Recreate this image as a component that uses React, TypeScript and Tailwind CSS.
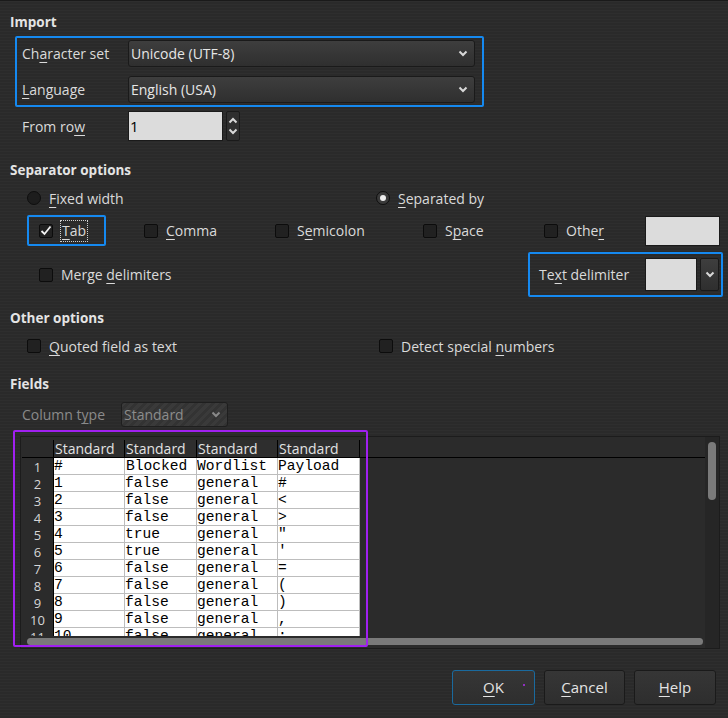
import React from 'react';

const ui = "font-['Open_Sans',sans-serif]";
const mono = "font-['Liberation_Mono',monospace]";

const U: React.FC<{ children: React.ReactNode }> = ({ children }) => (
  <span className="underline underline-offset-[3px] decoration-1">{children}</span>
);

const Chevron: React.FC<{ up?: boolean; color?: string }> = ({ up, color = '#d8d8d8' }) => (
  <svg width="10" height="7" viewBox="0 0 10 7">
    <polyline
      points={up ? '1.5,5.5 5,2 8.5,5.5' : '1.5,1.5 5,5 8.5,1.5'}
      fill="none"
      stroke={color}
      strokeWidth="2"
    />
  </svg>
);

const Check: React.FC<{ checked?: boolean }> = ({ checked }) => (
  <span className="w-[14px] h-[14px] shrink-0 rounded-[2px] border border-[#0c0c0c] bg-[#212121] flex items-center justify-center">
    {checked && (
      <svg width="12" height="11" viewBox="0 0 12 11">
        <polyline points="1.5,6 4.5,9 10.5,1.5" fill="none" stroke="#f2f2f2" strokeWidth="1.8" />
      </svg>
    )}
  </span>
);

const Radio: React.FC<{ on?: boolean }> = ({ on }) => (
  <span
    className={`w-[14px] h-[14px] shrink-0 rounded-full border border-[#0e0e0e] flex items-center justify-center ${
      on ? 'bg-[#3a3a3a]' : 'bg-[#1d1d1d]'
    }`}
  >
    {on && <span className="w-[6px] h-[6px] rounded-full bg-[#eeeeee]" />}
  </span>
);

const Select: React.FC<{ value: string }> = ({ value }) => (
  <div className="w-[347px] h-[27px] rounded-[3px] border border-[#1a1a1a] bg-gradient-to-b from-[#3e3e3e] to-[#2f2f2f] flex items-center justify-between pl-[2px] pr-[6px] text-[#e6e6e6]">
    <span>{value}</span>
    <Chevron />
  </div>
);

const Heading: React.FC<{ children: React.ReactNode; mt: string }> = ({ children, mt }) => (
  <div className={`h-[20px] leading-[20px] pl-[10px] font-bold text-[13.5px] text-[#e4e4e4] ${mt}`}>{children}</div>
);

const rows = [
  ['#', 'Blocked', 'Wordlist', 'Payload'],
  ['1', 'false', 'general', '#'],
  ['2', 'false', 'general', '<'],
  ['3', 'false', 'general', '>'],
  ['4', 'true', 'general', '"'],
  ['5', 'true', 'general', "'"],
  ['6', 'false', 'general', '='],
  ['7', 'false', 'general', '('],
  ['8', 'false', 'general', ')'],
  ['9', 'false', 'general', ','],
  ['10', 'false', 'general', ';'],
  ['11', 'false', 'general', ':'],
];

const colW = ['w-[71px]', 'w-[72px]', 'w-[81px]', 'w-[82px]'];

const Grid: React.FC = () => (
  <div className="relative mt-[9px] ml-[20px] w-[700px] h-[213px] border border-[#1c1c1c] bg-[#2b2b2b] flex">
    <div className="flex-1 flex flex-col min-w-0">
      <div className="flex-1 overflow-hidden pt-[3px] pl-[1px]">
        <div className="flex h-[18px] border-b border-black text-[#e2e2e2] text-[14px] leading-[18px]">
          <div className="w-[32px] border-r border-black bg-[#2b2b2b]" />
          {colW.map((w, i) => (
            <div key={i} className={`${w} pl-[1px] border-r border-black bg-[#2e2e2e]`}>
              Standard
            </div>
          ))}
        </div>
        {rows.map((r, i) => (
          <div key={i} className="flex h-[17px]">
            <div className="w-[32px] h-[17px] text-center text-[13px] text-[#d6d6d6] leading-[16px] pt-[1px] bg-[#2b2b2b] border-r border-black">
              {i + 1}
            </div>
            {r.map((c, j) => (
              <div
                key={j}
                className={`${colW[j]} h-[17px] bg-white border-r border-b border-[#bdbdbd] text-black ${mono} text-[14.6px] leading-[16px] whitespace-pre overflow-hidden ${
                  i === 0 && j === 1 ? 'pl-[1px]' : ''
                }`}
              >
                {c}
              </div>
            ))}
          </div>
        ))}
      </div>
      <div className="h-[12px] pt-[2px] pl-[6px]">
        <div className="w-[676px] h-[7px] rounded-full bg-[#7a7a7a]" />
      </div>
    </div>
    <div className="w-[14px] bg-[#262626] pt-[5px] pl-[3px]">
      <div className="w-[8px] h-[58px] rounded-full bg-[#7a7a7a]" />
    </div>
    <div className="absolute left-[-8px] top-[-7px] w-[355px] h-[217px] border-2 border-[#a020f0] rounded-[2px] pointer-events-none" />
  </div>
);

const Button: React.FC<{ children: React.ReactNode; w: string; focus?: boolean }> = ({ children, w, focus }) => (
  <div
    className={`relative ${w} h-[35px] rounded-[3px] border bg-gradient-to-b from-[#363636] to-[#2e2e2e] flex items-center justify-center text-[#e4e4e4] text-[15px] ${
      focus ? 'border-[#1a6a9e]' : 'border-[#1a1a1a]'
    }`}
  >
    {children}
    {focus && <span className="absolute right-[9px] top-[13px] w-[2px] h-[2px] rounded-full bg-[#b030f0]" />}
  </div>
);

export default function App() {
  return (
    <div
      className={`${ui} w-[728px] h-[718px] bg-[#2c2c2c] bg-[repeating-linear-gradient(180deg,#2e2e2e_0px,#2e2e2e_1px,#2a2a2a_1px,#2a2a2a_3px)] border-t border-[#1a1a1a] text-[14px] text-[#dadada] flex flex-col overflow-hidden`}
    >
      <Heading mt="mt-[11px]">Import</Heading>

      <div className="mt-[4px] ml-[15px] w-[469px] h-[71px] border-2 border-[#1589f0] rounded-[2px] pt-[2px] pl-[5px] flex flex-col gap-[9px]">
        <div className="flex items-center">
          <span className="w-[106px]">
            Ch<U>a</U>racter set
          </span>
          <Select value="Unicode (UTF-8)" />
        </div>
        <div className="flex items-center">
          <span className="w-[106px]">
            <U>L</U>anguage
          </span>
          <Select value="English (USA)" />
        </div>
      </div>

      <div className="mt-[4px] ml-[22px] h-[30px] flex items-center">
        <span className="w-[106px]">
          From ro<U>w</U>
        </span>
        <div className="w-[95px] h-[30px] border border-[#1a1a1a] bg-[#dcdcdc] text-black text-[15px] flex items-center pl-[1px]">1</div>
        <div className="ml-[3px] w-[14px] h-[30px] rounded-[2px] border border-[#1a1a1a] bg-[#2f2f2f] flex flex-col items-center justify-center gap-[4px]">
          <Chevron up />
          <Chevron />
        </div>
      </div>

      <Heading mt="mt-[19px]">Separator options</Heading>

      <div className="mt-[8px] h-[20px] flex items-center pl-[27px]">
        <div className="w-[349px] flex items-center gap-[8px]">
          <Radio />
          <span>
            <U>F</U>ixed width
          </span>
        </div>
        <div className="flex items-center gap-[8px]">
          <Radio on />
          <span>
            <U>S</U>eparated by
          </span>
        </div>
      </div>

      <div className="mt-[7px] h-[31px] flex items-center pl-[27px]">
        <div className="w-[79px] h-[31px] border-2 border-[#1589f0] rounded-[2px] flex items-center pl-[10px] gap-[7px]">
          <Check checked />
          <span className="border border-dotted border-[#cfcfcf] px-[1px] leading-[20px]">
            <U>T</U>ab
          </span>
        </div>
        <div className="ml-[38px] w-[131px] flex items-center gap-[8px]">
          <Check />
          <span>
            <U>C</U>omma
          </span>
        </div>
        <div className="w-[148px] flex items-center gap-[8px]">
          <Check />
          <span>
            S<U>e</U>micolon
          </span>
        </div>
        <div className="w-[121px] flex items-center gap-[8px]">
          <Check />
          <span>
            S<U>p</U>ace
          </span>
        </div>
        <div className="w-[101px] flex items-center gap-[8px]">
          <Check />
          <span>
            Othe<U>r</U>
          </span>
        </div>
        <div className="w-[75px] h-[30px] border border-[#1a1a1a] bg-[#dcdcdc]" />
      </div>

      <div className="mt-[6px] h-[45px] flex items-center pl-[39px]">
        <div className="w-[489px] flex items-center gap-[8px]">
          <Check />
          <span>
            Merge <U>d</U>elimiters
          </span>
        </div>
        <div className="w-[195px] h-[45px] border-2 border-[#1589f0] rounded-[2px] flex items-center pl-[9px]">
          <span className="w-[106px]">
            Te<U>x</U>t delimiter
          </span>
          <div className="w-[52px] h-[33px] border border-[#1a1a1a] bg-[#dcdcdc]" />
          <div className="ml-[3px] w-[19px] h-[33px] rounded-[2px] border border-[#1a1a1a] bg-gradient-to-b from-[#3e3e3e] to-[#2f2f2f] flex items-center justify-center">
            <Chevron />
          </div>
        </div>
      </div>

      <Heading mt="mt-[11px]">Other options</Heading>

      <div className="mt-[8px] h-[20px] flex items-center pl-[27px]">
        <div className="w-[352px] flex items-center gap-[8px]">
          <Check />
          <span>
            <U>Q</U>uoted field as text
          </span>
        </div>
        <div className="flex items-center gap-[8px]">
          <Check />
          <span>
            Detect special <U>n</U>umbers
          </span>
        </div>
      </div>

      <Heading mt="mt-[18px]">Fields</Heading>

      <div className="mt-[8px] h-[25px] flex items-center pl-[22px]">
        <span className="w-[99px] text-[#8a8a8a]">
          Column t<U>y</U>pe
        </span>
        <div className="w-[107px] h-[25px] rounded-[3px] border border-[#1e1e1e] bg-[repeating-linear-gradient(135deg,#3a3a3a_0px,#3a3a3a_3px,#333333_3px,#333333_6px)] flex items-center justify-between pl-[2px] pr-[6px] text-[#8c8c8c]">
          <span>Standard</span>
          <Chevron color="#8a8a8a" />
        </div>
      </div>

      <Grid />

      <div className="mt-[21px] flex justify-end gap-[9px] pr-[12px]">
        <Button w="w-[83px]" focus>
          <U>O</U>K
        </Button>
        <Button w="w-[81px]">
          <U>C</U>ancel
        </Button>
        <Button w="w-[82px]">
          <U>H</U>elp
        </Button>
      </div>
    </div>
  );
}
